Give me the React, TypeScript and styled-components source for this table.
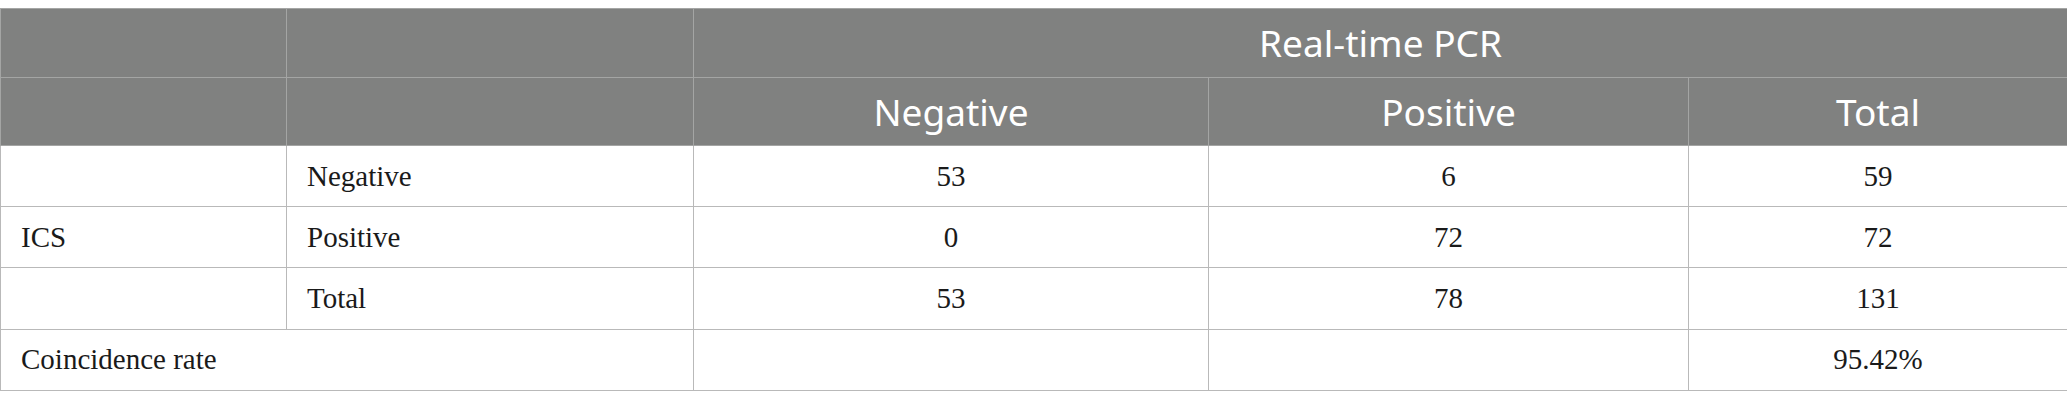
import React from "react";
import styled, { createGlobalStyle } from "styled-components";

const Global = createGlobalStyle`
  html, body { margin: 0; padding: 0; background: #ffffff; }
  #root { padding-top: 8px; }
`;

const Table = styled.table`
  width: 2067px;
  border-collapse: collapse;
  table-layout: fixed;
  border: 1px solid #b4b4b4;
`;

const HeadRow = styled.tr`
  height: 68.5px;
  background: #808180;
`;

const BodyRow = styled.tr`
  height: 61.2px;
  background: #ffffff;
`;

const HeadCell = styled.th`
  border: 1px solid #a4a5a4;
  padding: 0 20px;
  color: #ffffff;
  font-family: "Noto Sans", "Open Sans", sans-serif;
  font-weight: 400;
  font-size: 37px;
  text-align: center;
  vertical-align: middle;
  line-height: 1;
`;

const BodyCell = styled.td<{ $align?: "left" | "center" }>`
  border: 1px solid #b9b9b9;
  padding: 0 20px;
  color: #1a1a1a;
  font-family: "Liberation Serif", "Times New Roman", serif;
  font-size: 29px;
  text-align: ${(p) => p.$align ?? "center"};
  vertical-align: middle;
  line-height: 1;
  white-space: nowrap;
`;

const widths = [286, 407, 515, 480, 379];

const rows: { label: string; sub: string; vals: string[] }[] = [
  { label: "", sub: "Negative", vals: ["53", "6", "59"] },
  { label: "ICS", sub: "Positive", vals: ["0", "72", "72"] },
  { label: "", sub: "Total", vals: ["53", "78", "131"] },
];

export default function App() {
  return (
    <>
      <Global />
      <Table>
        <colgroup>
          {widths.map((w, i) => (
            <col key={i} style={{ width: w }} />
          ))}
        </colgroup>
        <thead>
          <HeadRow>
            <HeadCell />
            <HeadCell />
            <HeadCell colSpan={3}>Real-time PCR</HeadCell>
          </HeadRow>
          <HeadRow>
            <HeadCell />
            <HeadCell />
            <HeadCell>Negative</HeadCell>
            <HeadCell>Positive</HeadCell>
            <HeadCell>Total</HeadCell>
          </HeadRow>
        </thead>
        <tbody>
          {rows.map((r, i) => (
            <BodyRow key={i}>
              <BodyCell $align="left">{r.label}</BodyCell>
              <BodyCell $align="left">{r.sub}</BodyCell>
              {r.vals.map((v, j) => (
                <BodyCell key={j}>{v}</BodyCell>
              ))}
            </BodyRow>
          ))}
          <BodyRow>
            <BodyCell $align="left" colSpan={2}>
              Coincidence rate
            </BodyCell>
            <BodyCell />
            <BodyCell />
            <BodyCell>95.42%</BodyCell>
          </BodyRow>
        </tbody>
      </Table>
    </>
  );
}
